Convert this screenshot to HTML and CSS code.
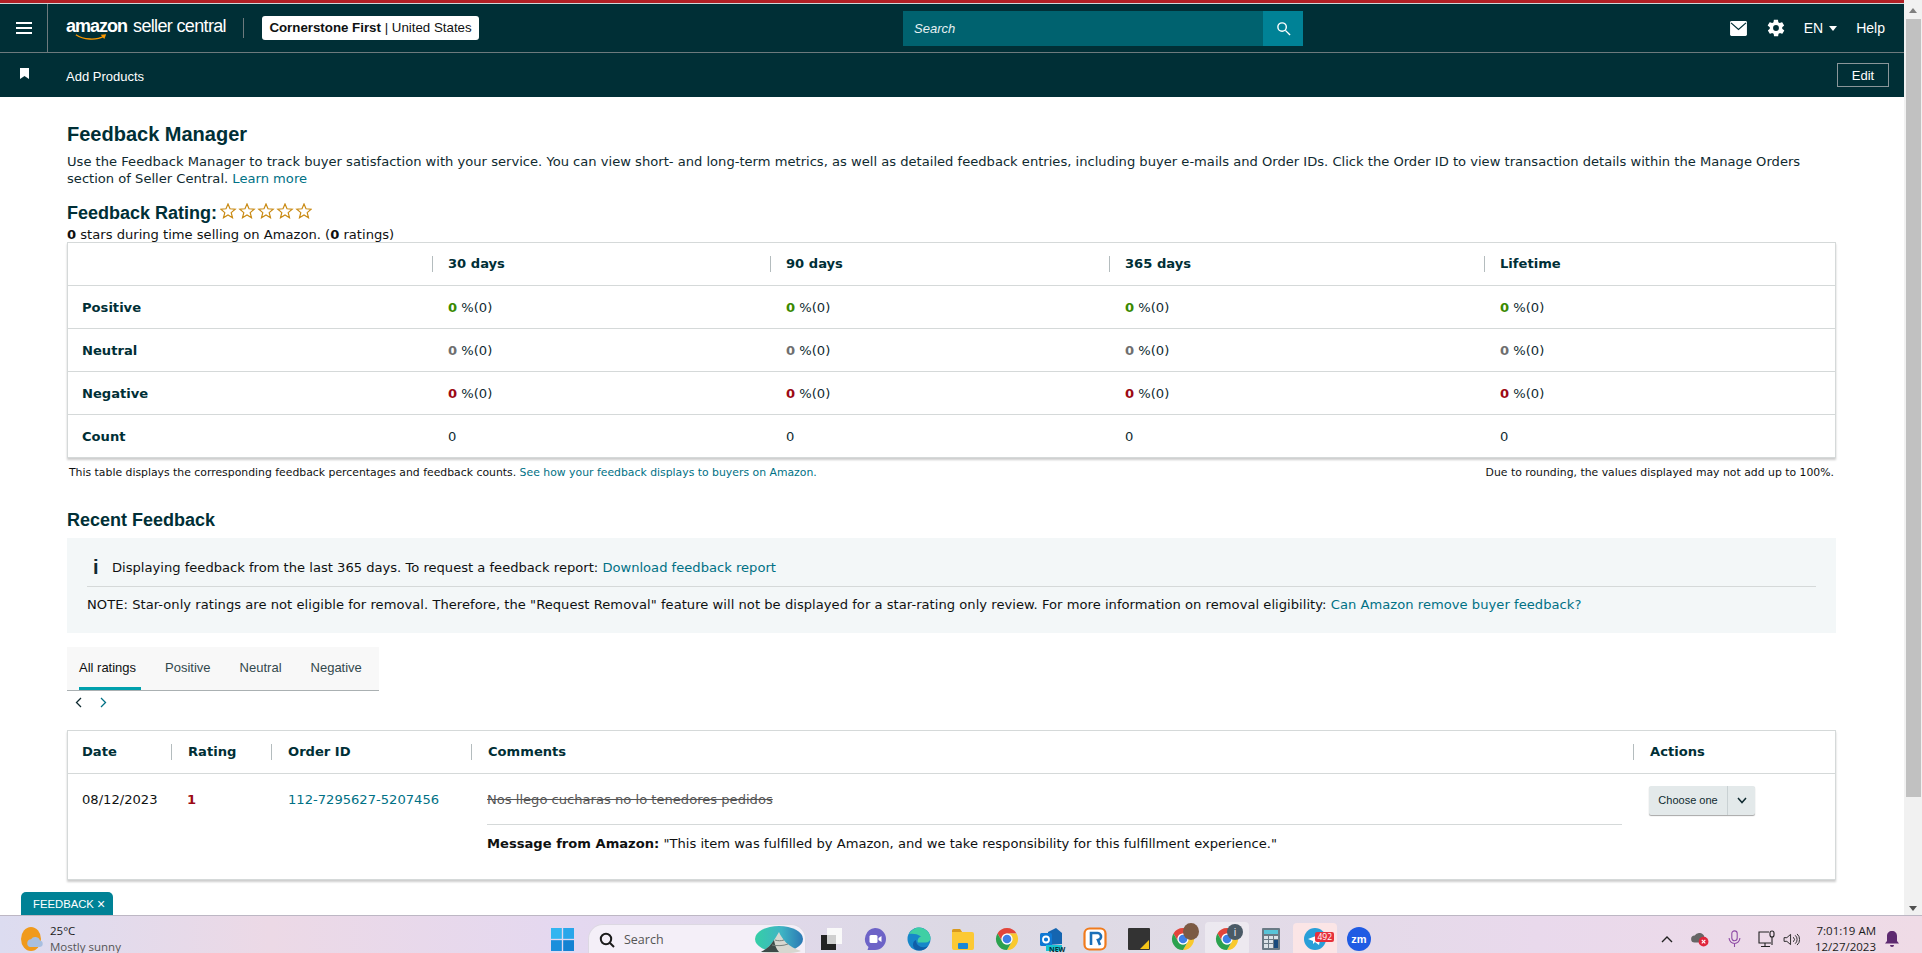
FILE: index.html
```html
<!DOCTYPE html>
<html lang="en">
<head>
    <meta charset="UTF-8">
    <meta name="viewport" content="width=device-width, initial-scale=1.0">
    <title>Feedback Manager</title>
    <link rel="stylesheet" href="styles.css">
</head>
<body>
    <div class="browser">
        <div class="page">
            <header class="topbar">
                <div class="nav-main">
                    <div class="menu-cell">
                        <svg class="icon-menu" viewBox="0 0 16 12"><path d="M0 1h16M0 6h16M0 11h16"/></svg>
                    </div>
                    <div class="logo">
                        <span class="logo-amazon">amazon</span><span class="logo-seller">seller central</span>
                        <svg class="logo-smile" viewBox="0 0 36 9"><path class="smile-line" d="M1 1.500C9 7 23 8 32 3"/><path class="smile-tip" d="M28 1.500l6-.5-2 5z"/></svg>
                    </div>
                    <div class="logo-divider"></div>
                    <div class="tenant"><b>Cornerstone First</b> | United States</div>
                    <div class="search">
                        <div class="search-input">Search</div>
                        <div class="search-btn">
                            <svg viewBox="0 0 16 16"><circle cx="6.500" cy="6.500" r="4.500"/><path d="M10 10l5 5"/></svg>
                        </div>
                    </div>
                    <div class="nav-right">
                        <svg class="icon-mail" viewBox="0 0 18 16"><rect width="18" height="16" rx="1.500" fill="#fff"/><path d="M1 2l8 7 8-7" fill="none" stroke="#002f36" stroke-width="1.300"/></svg>
                        <svg class="icon-gear" viewBox="0 0 24 24"><path d="M19.400 13c.1-.3.1-.7.1-1s0-.7-.1-1l2.100-1.600c.2-.2.2-.4.1-.6l-2-3.500c-.1-.2-.4-.3-.6-.2l-2.500 1c-.5-.4-1.100-.7-1.700-1l-.4-2.600c0-.3-.2-.5-.5-.5h-4c-.3 0-.5.2-.5.500l-.4 2.600c-.6.300-1.200.6-1.700 1l-2.500-1c-.2-.1-.5 0-.6.200l-2 3.500c-.1.200-.1.500.1.600L4.600 11c-.1.300-.1.700-.1 1s0 .7.100 1l-2.100 1.600c-.2.200-.2.400-.1.600l2 3.500c.1.200.4.300.6.200l2.500-1c.5.400 1.100.7 1.700 1l.4 2.600c0 .3.200.5.500.5h4c.3 0 .5-.2.500-.5l.4-2.600c.6-.3 1.200-.6 1.700-1l2.500 1c.2.100.5 0 .6-.2l2-3.500c.1-.2.100-.4-.1-.6zM12 15.500a3.500 3.500 0 1 1 0-7 3.500 3.500 0 0 1 0 7z"/></svg>
                        <span class="lang">EN<i class="caret"></i></span>
                        <span>Help</span>
                    </div>
                </div>
                <div class="nav-sub">
                    <svg class="icon-bookmark" viewBox="0 0 9 11"><path d="M0 0h9v11L4.500 8 0 11z"/></svg>
                    <span class="sub-link">Add Products</span>
                    <button class="edit-btn">Edit</button>
                </div>
            </header>

            <main class="content">
                <h1 class="title">Feedback Manager</h1>
                <p class="intro">Use the Feedback Manager to track buyer satisfaction with your service. You can view short- and long-term metrics, as well as detailed feedback entries, including buyer e-mails and Order IDs. Click the Order ID to view transaction details within the Manage Orders section of Seller Central. <a href="#">Learn more</a></p>

                <div class="rating-head">
                    <h2>Feedback Rating:</h2>
                    <svg class="stars" viewBox="0 0 92 16">
                        <defs><path id="star" d="M8 1l2 4.800 5.200.4-4 3.400 1.300 5.100L8 11.900l-4.500 2.800 1.300-5.100-4-3.400L6 5.800z"/></defs>
                        <use href="#star"/><use href="#star" x="19"/><use href="#star" x="38"/><use href="#star" x="57"/><use href="#star" x="76"/>
                    </svg>
                </div>
                <p class="rating-sub"><b>0</b> stars during time selling on Amazon. (<b>0</b> ratings)</p>

                <div class="card stats">
                    <div class="stats-row head">
                        <div></div>
                        <div class="th">30 days</div>
                        <div class="th">90 days</div>
                        <div class="th">365 days</div>
                        <div class="th">Lifetime</div>
                    </div>
                    <div class="stats-row">
                        <div class="label">Positive</div>
                        <div class="val"><b class="pos">0</b> %(0)</div>
                        <div class="val"><b class="pos">0</b> %(0)</div>
                        <div class="val"><b class="pos">0</b> %(0)</div>
                        <div class="val"><b class="pos">0</b> %(0)</div>
                    </div>
                    <div class="stats-row">
                        <div class="label">Neutral</div>
                        <div class="val"><b class="neu">0</b> %(0)</div>
                        <div class="val"><b class="neu">0</b> %(0)</div>
                        <div class="val"><b class="neu">0</b> %(0)</div>
                        <div class="val"><b class="neu">0</b> %(0)</div>
                    </div>
                    <div class="stats-row">
                        <div class="label">Negative</div>
                        <div class="val"><b class="neg">0</b> %(0)</div>
                        <div class="val"><b class="neg">0</b> %(0)</div>
                        <div class="val"><b class="neg">0</b> %(0)</div>
                        <div class="val"><b class="neg">0</b> %(0)</div>
                    </div>
                    <div class="stats-row">
                        <div class="label">Count</div>
                        <div class="val">0</div>
                        <div class="val">0</div>
                        <div class="val">0</div>
                        <div class="val">0</div>
                    </div>
                </div>
                <div class="stats-note">
                    <span>This table displays the corresponding feedback percentages and feedback counts. <a href="#">See how your feedback displays to buyers on Amazon.</a></span>
                    <span>Due to rounding, the values displayed may not add up to 100%.</span>
                </div>

                <h2 class="section-title">Recent Feedback</h2>
                <div class="notice">
                    <div class="notice-top"><span class="info-i">i</span>Displaying feedback from the last 365 days. To request a feedback report: <a href="#">Download feedback report</a></div>
                    <div class="notice-note">NOTE: Star-only ratings are not eligible for removal. Therefore, the "Request Removal" feature will not be displayed for a star-rating only review. For more information on removal eligibility: <a href="#">Can Amazon remove buyer feedback?</a></div>
                </div>

                <div class="tabs">
                    <span class="tab active">All ratings</span>
                    <span class="tab">Positive</span>
                    <span class="tab">Neutral</span>
                    <span class="tab">Negative</span>
                </div>
                <div class="pager">
                    <svg viewBox="0 0 7 11"><path d="M6 1L1.500 5.500 6 10"/></svg>
                    <svg class="next" viewBox="0 0 7 11"><path d="M1 1l4.500 4.500L1 10"/></svg>
                </div>

                <div class="card recent">
                    <div class="recent-row head">
                        <div class="th first">Date</div>
                        <div class="th">Rating</div>
                        <div class="th">Order ID</div>
                        <div class="th">Comments</div>
                        <div class="th">Actions</div>
                    </div>
                    <div class="recent-row body">
                        <div class="cell-date">08/12/2023</div>
                        <div class="cell-rating"><b class="neg">1</b></div>
                        <div class="cell-order"><a href="#">112-7295627-5207456</a></div>
                        <div class="cell-comment">
                            <div class="struck">Nos llego cucharas no lo tenedores pedidos</div>
                            <div class="amazon-msg"><b>Message from Amazon:</b> "This item was fulfilled by Amazon, and we take responsibility for this fulfillment experience."</div>
                        </div>
                        <div class="cell-action">
                            <div class="choose">
                                <span class="choose-label">Choose one</span>
                                <span class="choose-arrow"><svg viewBox="0 0 10 7"><path d="M1 1l4 4.500L9 1"/></svg></span>
                            </div>
                        </div>
                    </div>
                </div>
            </main>
        </div>
        <div class="scrollbar">
            <i class="arrow up"></i>
            <div class="thumb"></div>
            <i class="arrow down"></i>
        </div>
        <div class="feedback-tab">FEEDBACK <span>×</span></div>
    </div>

    <footer class="taskbar">
        <div class="weather">
            <svg viewBox="0 0 24 28" width="24" height="28"><ellipse cx="10" cy="14" rx="10" ry="12" fill="#f09a1c"/><path d="M9 22a4 4 0 0 1 1-7.800 5 5 0 0 1 9 1.300 3.300 3.300 0 0 1 0 6.500z" fill="#a8bfe0"/></svg>
            <div class="weather-text"><span>25°C</span><span class="weather-sub">Mostly sunny</span></div>
        </div>
        <div class="task-center">
            <svg class="task-win" viewBox="0 0 24 24"><rect width="11.300" height="11.300" fill="#33b5f0"/><rect x="12.700" width="11.300" height="11.300" fill="#2aa6ea"/><rect y="12.700" width="11.300" height="11.300" fill="#1a8fdc"/><rect x="12.700" y="12.700" width="11.300" height="11.300" fill="#1482d2"/></svg>
            <div class="task-search">
                <svg viewBox="0 0 16 16"><circle cx="7" cy="7" r="5.200"/><path d="M11 11l4 4"/></svg>
                <span>Search</span>
                <svg class="search-art" viewBox="0 0 50 29">
                    <defs><linearGradient id="art-sky" x1="0" x2="1" y1="0" y2="0"><stop offset="0" stop-color="#35cfa6"/><stop offset="0.55" stop-color="#3fb4c4"/><stop offset="1" stop-color="#2b78b4"/></linearGradient></defs>
                    <ellipse cx="25" cy="14" rx="24" ry="13" fill="url(#art-sky)"/>
                    <path d="M7 27C16 23 21 14 25 7c3 7 9 15 22 19-7 3-30 3-40 1z" fill="#d7d7d0"/>
                    <path d="M7 27c6-3 10-7 13-12 1 5 2 9 5 12z" fill="#3d4a48"/>
                    <path d="M21 15c3 1 6 1 9 0M18 20c5 1 11 1 16-1" fill="none" stroke="#77807c"/>
                </svg>
            </div>
            <div class="task-icon"><svg viewBox="0 0 24 24"><rect x="8" y="1" width="15" height="16" fill="#f9f9f9"/><rect x="2" y="8" width="15" height="15" fill="#232323"/><rect x="8" y="8" width="9" height="9" fill="#cfcfcf"/></svg></div>
            <div class="task-icon"><svg viewBox="0 0 24 24"><path d="M12 1a11 11 0 0 1 0 22H4.500l1-3A11 11 0 0 1 12 1z" fill="#6d63c7"/><rect x="6.500" y="8" width="8" height="8" rx="1.500" fill="#fff"/><path d="M15.500 11l3-2v6l-3-2z" fill="#fff"/></svg></div>
            <div class="task-icon"><svg viewBox="0 0 24 24"><circle cx="12" cy="12" r="11.500" fill="#1787c9"/><path d="M2 7C5 2 9 .5 12 .5c6 0 11.500 5 11.500 11 0 2-2 4-5 4H11c-1-2 0-5 3-6-4-3-9-3-12-2.500z" fill="#3fcfa4"/><path d="M9 13c0 6 6 9 12 6-2 3-5 4.500-9 4.500-4 0-6-3-6-6 0-2 1-4 3-4.500z" fill="#0f5fa8"/></svg></div>
            <div class="task-icon"><svg viewBox="0 0 24 24"><path d="M1 4a2 2 0 0 1 2-2h6l2 3h10a2 2 0 0 1 2 2v14a2 2 0 0 1-2 2H3a2 2 0 0 1-2-2z" fill="#fcc934"/><path d="M1 4a2 2 0 0 1 2-2h6l2 3H1z" fill="#d99a1e"/><rect x="7" y="16" width="10" height="6" rx="1" fill="#1b87d6"/></svg></div>
            <div class="task-icon"><svg viewBox="0 0 24 24"><use href="#chrome-logo"/></svg></div>
            <div class="task-icon"><svg viewBox="0 0 24 24"><path d="M9 5l8-4 6 5v11l-14 1z" fill="#1565b0"/><rect x="1" y="6" width="12" height="13" rx="1.500" fill="#0f78d4"/><circle cx="7" cy="12.500" r="3" fill="none" stroke="#fff" stroke-width="1.800"/><rect x="7" y="18" width="16" height="6" fill="#17c4d4"/></svg><span class="new-tag">NEW</span></div>
            <div class="task-icon"><svg viewBox="0 0 24 24"><rect x="1.500" y="1.500" width="21" height="21" rx="5" fill="#fff" stroke="#f07b1d" stroke-width="2.200"/><path d="M8 18V6h6a3.500 3.500 0 0 1 1 7l2 5" fill="none" stroke="#1a6fb8" stroke-width="2.600"/></svg></div>
            <div class="task-icon"><svg viewBox="0 0 24 24"><rect x="1" y="1" width="22" height="22" rx="1" fill="#333"/><path d="M13 22l9-9v9z" fill="#f5c518"/></svg></div>
            <div class="task-icon"><svg viewBox="0 0 24 24"><use href="#chrome-logo"/></svg><span class="task-photo"></span></div>
            <div class="task-icon active"><svg viewBox="0 0 24 24"><use href="#chrome-logo"/></svg><span class="task-i">i</span></div>
            <div class="task-icon"><svg viewBox="0 0 24 24"><rect x="3" y="1" width="18" height="22" rx="1" fill="#6a7a85"/><rect x="5" y="3" width="14" height="4" fill="#58c4d8"/><path d="M5 9h4v3H5zM10 9h4v3h-4zM15 9h4v3h-4zM5 13h4v3H5zM10 13h4v3h-4zM5 17h4v4H5zM10 17h4v4h-4z" fill="#dbe3e8"/><rect x="15" y="13" width="4" height="8" fill="#174a7c"/></svg></div>
            <div class="task-icon pinned"><svg viewBox="0 0 24 24"><circle cx="12" cy="12" r="11" fill="#2a9fd8"/><path d="M5 12l13-5-2 11-4-3-2 2v-3z" fill="#fff"/></svg><span class="task-badge">492</span></div>
            <div class="task-icon"><svg viewBox="0 0 24 24"><circle cx="12" cy="12" r="12" fill="#1f5be3"/><text class="zm" x="12" y="16" text-anchor="middle">zm</text></svg></div>
        </div>
        <div class="tray">
            <svg class="tray-chevron" viewBox="0 0 12 7"><path d="M1 6l5-5 5 5"/></svg>
            <svg class="tray-cloud" viewBox="0 0 20 18"><path d="M4 13a4 4 0 0 1 0-8 6 6 0 0 1 11 2 3 3 0 0 1 0 6z" fill="#666"/><circle cx="14" cy="12" r="5.500" fill="#e0263c"/><path d="M12 10l4 4m0-4l-4 4" stroke="#fff" stroke-width="1.300"/></svg>
            <svg class="tray-mic" viewBox="0 0 14 20"><rect x="4" y="1" width="6" height="11" rx="3"/><path d="M1 9a6 6 0 0 0 12 0M7 15v4"/></svg>
            <svg class="tray-net" viewBox="0 0 18 18"><path d="M11 2H1v11h12M7 13v3M3 16.500h9"/><rect x="12" y="1" width="4" height="6" rx="2"/><path d="M14 7v8"/></svg>
            <svg class="tray-sound" viewBox="0 0 18 14"><path d="M1 5v4h3l4 3.500v-11L4 5zM11 4.500a3.500 3.500 0 0 1 0 5M13 2.500a6 6 0 0 1 0 9M15 1a8 8 0 0 1 0 12"/></svg>
            <div class="clock"><span>7:01:19 AM</span><span>12/27/2023</span></div>
            <svg class="tray-bell" viewBox="0 0 14 16"><path d="M7 0c3 0 5 2 5 5v5l2 2.500H0L2 10V5c0-3 2-5 5-5z"/><path d="M5 14h4a2 2 0 0 1-4 0z"/></svg>
        </div>
    </footer>

    <svg class="defs" width="0" height="0">
        <defs>
            <g id="chrome-logo">
                <path d="M2.470 6.500A11 11 0 0 1 21.530 6.500H12A5.500 5.500 0 0 0 7.240 14.750z" fill="#e2453a"/>
                <path d="M21.530 6.500A11 11 0 0 1 12 23l4.760-8.250A5.500 5.500 0 0 0 12 6.500z" fill="#f9c92e"/>
                <path d="M12 23A11 11 0 0 1 2.470 6.500l4.770 8.250a5.500 5.500 0 0 0 9.520 0z" fill="#2ca24f"/>
                <circle cx="12" cy="12" r="5.500" fill="#fff"/>
                <circle cx="12" cy="12" r="4.300" fill="#3f7fe6"/>
            </g>
        </defs>
    </svg>
</body>
</html>
```

FILE: styles.css
```css
* {
    margin: 0;
    padding: 0;
    box-sizing: border-box;
}

html, body {
    height: 100%;
    overflow: hidden;
}

body {
    display: flex;
    flex-direction: column;
    font-family: "DejaVu Sans", Verdana, sans-serif;
    font-size: 13.1px;
    color: #0f1111;
    background: #fff;
}

a {
    color: #007185;
    text-decoration: none;
}

.browser {
    flex: 1;
    display: flex;
    position: relative;
    min-height: 0;
}

.page {
    flex: 1;
    min-width: 0;
    overflow: hidden;
}

/* top nav */
.topbar {
    background: #002f36;
    border-top: 3px solid #b12025;
    color: #fff;
    font-family: "Liberation Sans", Arial, sans-serif;
}

.nav-main {
    height: 50px;
    border-top: 1px solid #cfd8da;
    border-bottom: 1px solid #6d7a7d;
    display: flex;
    align-items: center;
}

.menu-cell {
    width: 48px;
    height: 100%;
    border-right: 1px solid #6d7a7d;
    display: flex;
    align-items: center;
    justify-content: center;
}

.icon-menu {
    width: 16px;
    height: 12px;
    stroke: #fff;
    stroke-width: 2;
}

.logo {
    position: relative;
    margin-left: 18px;
    width: 160px;
    height: 34px;
    font-size: 18px;
    line-height: 31px;
    white-space: nowrap;
}

.logo-amazon {
    font-weight: 700;
    letter-spacing: -1px;
}

.logo-seller {
    margin-left: 6px;
    font-weight: 400;
    letter-spacing: -0.65px;
}

.logo-smile {
    position: absolute;
    left: 9px;
    top: 22px;
    width: 33px;
    height: 9px;
}

.smile-line {
    fill: none;
    stroke: #f90;
    stroke-width: 1.500;
}

.smile-tip {
    fill: #f90;
}

.logo-divider {
    width: 1px;
    height: 20px;
    background: #6d7a7d;
    margin-left: 17px;
}

.tenant {
    margin-left: 18px;
    width: 217px;
    height: 24px;
    background: #fff;
    border-radius: 3px;
    color: #0f1111;
    font-size: 13.3px;
    line-height: 24px;
    text-align: center;
    white-space: nowrap;
}

.search {
    margin-left: 424px;
    width: 400px;
    height: 35px;
    display: flex;
}

.search-input {
    flex: 1;
    background: #00626f;
    color: #e6f0f2;
    font-style: italic;
    font-size: 13px;
    line-height: 35px;
    padding-left: 11px;
}

.search-btn {
    width: 40px;
    background: #008296;
    display: flex;
    align-items: center;
    justify-content: center;
}

.search-btn svg {
    width: 15px;
    height: 15px;
    fill: none;
    stroke: #fff;
    stroke-width: 1.500;
}

.nav-right {
    margin-left: auto;
    margin-right: 19px;
    display: flex;
    align-items: center;
    font-size: 14px;
}

.icon-mail {
    width: 17px;
    height: 15px;
}

.icon-gear {
    width: 20px;
    height: 20px;
    fill: #fff;
    margin-left: 19px;
}

.lang {
    margin-left: 18px;
    margin-right: 19px;
    display: flex;
    align-items: center;
}

.caret {
    margin-left: 6px;
    border: 4px solid transparent;
    border-top: 5px solid #fff;
    border-bottom: 0;
}

.nav-sub {
    height: 44px;
    display: flex;
    align-items: center;
    font-size: 13px;
}

.icon-bookmark {
    width: 9px;
    height: 11px;
    fill: #fff;
    margin-left: 20px;
    margin-top: -3px;
}

.sub-link {
    margin-left: 37px;
    margin-top: 2px;
}

.edit-btn {
    margin-left: auto;
    margin-right: 15px;
    width: 52px;
    height: 24px;
    background: transparent;
    border: 1px solid #8a9699;
    color: #fff;
    font-family: inherit;
    font-size: 13px;
}

/* main content */
.content {
    padding: 24px 0 0 67px;
    width: 1836px;
}

.title {
    font-family: "Liberation Sans", Arial, sans-serif;
    font-size: 20px;
    line-height: 26px;
    color: #002f36;
}

.intro {
    margin-top: 6px;
    line-height: 17px;
    color: #0f2a30;
    padding-right: 30px;
}

.rating-head {
    margin-top: 16px;
    display: flex;
    align-items: center;
    height: 20px;
}

.rating-head h2 {
    font-family: "Liberation Sans", Arial, sans-serif;
    font-size: 18px;
    color: #002f36;
}

.stars {
    width: 92px;
    height: 16px;
    margin-left: 3px;
    margin-top: -4px;
    fill: none;
    stroke: #c98a13;
    stroke-width: 1.200;
}

.rating-sub {
    line-height: 15px;
    margin-top: 4px;
}

.card {
    background: #fff;
    border: 1px solid #d5d9d9;
    box-shadow: 0 2px 2px rgba(0, 0, 0, 0.2);
}

.stats {
    height: 216px;
}

.stats-row {
    display: grid;
    grid-template-columns: 364px 338px 339px 375px 1fr;
    height: 43px;
    align-items: center;
    border-bottom: 1px solid #d5d9d9;
}

.stats-row:last-child {
    border-bottom: 0;
}

.th {
    font-weight: 700;
    color: #002f36;
    height: 16px;
    line-height: 16px;
    padding-left: 15px;
    border-left: 1px solid #b4bcbe;
}

.label {
    padding-left: 14px;
    font-weight: 700;
    color: #002f36;
}

.val {
    padding-left: 16px;
    color: #0f2a30;
}

.pos { color: #3a8a00; }
.neu { color: #6f6f6f; }
.neg { color: #9c0a14; }

.stats-note {
    display: flex;
    justify-content: space-between;
    padding: 8px 2px 0;
    font-size: 10.85px;
    line-height: 14px;
}

.section-title {
    margin-top: 30px;
    font-family: "Liberation Sans", Arial, sans-serif;
    font-size: 18px;
    line-height: 20px;
    color: #002f36;
}

.notice {
    margin-top: 8px;
    height: 95px;
    background: #f3f7f8;
    padding: 19px 20px 0;
}

.notice-top {
    padding: 0 0 7px 4px;
    border-bottom: 1px solid #d5d9d9;
    line-height: 22px;
}

.info-i {
    display: inline-block;
    width: 21px;
    font-family: "Liberation Sans", Arial, sans-serif;
    font-size: 20px;
    font-weight: 700;
    vertical-align: top;
    line-height: 20px;
    color: #0f2a30;
    padding-left: 2px;
}

.notice-note {
    margin-top: 9px;
    line-height: 17px;
    letter-spacing: 0.03px;
}

.tabs {
    margin-top: 14px;
    width: 312px;
    height: 44px;
    background: #f8f8f8;
    border-bottom: 1px solid #aab0b2;
    display: flex;
    font-family: "Liberation Sans", Arial, sans-serif;
    font-size: 13px;
}

.tab {
    margin-left: 29px;
    line-height: 42px;
    height: 43px;
    color: #33484d;
    white-space: nowrap;
}

.tab:first-child {
    margin-left: 12px;
}

.tab.active {
    padding-right: 5px;
    margin-right: -5px;
    color: #0f1111;
    border-bottom: 3px solid #00a0ad;
}

.pager {
    height: 23px;
    display: flex;
    align-items: center;
    padding-left: 8px;
    gap: 18px;
}

.pager svg {
    width: 7px;
    height: 11px;
    fill: none;
    stroke: #0f2a30;
    stroke-width: 1.300;
}

.pager .next {
    stroke: #007185;
}

.recent {
    margin-top: 16px;
    height: 150px;
}

.recent-row {
    display: grid;
    grid-template-columns: 103px 100px 200px 1162px 1fr;
    align-items: center;
}

.recent-row.head {
    height: 43px;
    border-bottom: 1px solid #d5d9d9;
}

.recent-row .th {
    padding-left: 16px;
}

.recent-row.body {
    align-items: start;
    padding-top: 17px;
    line-height: 17px;
}

.recent-row.head .first {
    padding-left: 14px;
    border-left: 0;
}

.cell-date {
    padding-left: 14px;
    white-space: nowrap;
}

.cell-rating {
    padding-left: 16px;
}

.cell-order {
    padding-left: 17px;
}

.cell-comment {
    padding-left: 16px;
    padding-right: 11px;
}

.struck {
    text-decoration: line-through;
    color: #555;
    padding-bottom: 16px;
    border-bottom: 1px solid #d5d9d9;
}

.amazon-msg {
    margin-top: 10px;
}

.cell-action {
    padding-left: 16px;
    margin-top: -5px;
}

.choose {
    width: 106px;
    height: 29px;
    display: flex;
    background: #e3e9ea;
    border-radius: 2px;
    box-shadow: 0 1px 1px rgba(0, 0, 0, 0.35);
    font-family: "Liberation Sans", Arial, sans-serif;
}

.choose-label {
    width: 78px;
    font-size: 11px;
    line-height: 29px;
    text-align: center;
    color: #0f2a30;
}

.choose-arrow {
    flex: 1;
    border-left: 1px solid #c9d1d3;
    display: flex;
    align-items: center;
    justify-content: center;
}

.choose-arrow svg {
    width: 10px;
    height: 7px;
    fill: none;
    stroke: #0f2a30;
    stroke-width: 1.500;
}

/* scrollbar */
.scrollbar {
    width: 18px;
    background: #f1f1f1;
    display: flex;
    flex-direction: column;
    align-items: center;
}

.thumb {
    width: 15px;
    height: 778px;
    margin-top: 3px;
    background: #c1c1c1;
}

.arrow {
    display: block;
    border: 4px solid transparent;
}

.arrow.up {
    margin-top: 8px;
    border-top: 0;
    border-bottom: 5px solid #7f7f7f;
    margin-bottom: 3px;
}

.arrow.down {
    margin-top: auto;
    margin-bottom: 4px;
    border-bottom: 0;
    border-top: 5px solid #505050;
}

.feedback-tab {
    position: absolute;
    left: 21px;
    bottom: 0;
    width: 92px;
    height: 23px;
    background: #008296;
    border-radius: 5px 5px 0 0;
    color: #fff;
    font-family: "Liberation Sans", Arial, sans-serif;
    font-size: 11.3px;
    line-height: 24px;
    padding-left: 12px;
    white-space: nowrap;
}

.feedback-tab span {
    font-size: 14px;
    vertical-align: -1px;
}

/* windows taskbar */
.taskbar {
    height: 38px;
    flex: none;
    display: flex;
    align-items: center;
    position: relative;
    padding-top: 9px;
    background: linear-gradient(90deg, #dcdcf0 0%, #ecd9e6 14%, #e4d8f0 30%, #dcd9e4 50%, #e0dbe6 62%, #e9d9ec 80%, #efdbe6 100%);
    border-top: 1px solid #bdb7c4;
    font-family: "Open Sans", "Noto Sans", sans-serif;
    color: #1b1b1b;
}

.weather {
    margin-left: 21px;
    display: flex;
    align-items: center;
    gap: 5px;
}

.weather-text {
    display: flex;
    flex-direction: column;
    font-size: 11.5px;
    line-height: 16px;
}

.weather-sub {
    color: #555;
}

.task-center {
    position: absolute;
    left: 551px;
    top: 0;
    padding-top: 9px;
    height: 100%;
    display: flex;
    align-items: center;
}

.task-win {
    width: 23px;
    height: 23px;
}

.task-search {
    margin-left: 14px;
    margin-right: 3px;
    width: 218px;
    height: 30px;
    border-radius: 15px 15px 0 0;
    background: #f4eff8;
    border: 1px solid #dcd8e2;
    border-bottom: 0;
    display: flex;
    align-items: center;
    padding-left: 10px;
    font-size: 12.5px;
    color: #555;
}

.task-search svg {
    width: 16px;
    height: 16px;
    fill: none;
    stroke: #1b1b1b;
    stroke-width: 2;
    margin-right: 9px;
}

.task-search .search-art {
    width: 50px;
    height: 29px;
    stroke: none;
    stroke-width: 1;
    margin-left: auto;
    margin-right: 1px;
}

.task-icon {
    position: relative;
    width: 44px;
    height: 33px;
    display: flex;
    align-items: center;
    justify-content: center;
}

.task-icon svg {
    width: 24px;
    height: 24px;
}

.task-icon.active {
    background: rgba(255, 255, 255, 0.4);
    border-radius: 4px;
    margin-top: -1px;
}

.task-icon.pinned {
    background: #fbe5e6;
    border-radius: 4px;
}

.task-photo {
    position: absolute;
    right: 6px;
    top: 0;
    width: 16px;
    height: 17px;
    border-radius: 50%;
    background: #7b5a44;
}

.task-i {
    position: absolute;
    right: 6px;
    top: 2px;
    width: 16px;
    height: 16px;
    border-radius: 50%;
    background: #4a5a66;
    color: #fff;
    font-size: 10px;
    line-height: 16px;
    text-align: center;
}

.task-badge {
    position: absolute;
    right: 3px;
    top: 9px;
    background: #e6313c;
    color: #fff;
    font-size: 8.5px;
    line-height: 10px;
    padding: 0 2px;
    border-radius: 2px;
}

.new-tag {
    position: absolute;
    left: 20px;
    bottom: 3px;
    font-size: 7px;
    line-height: 7px;
    font-weight: 700;
    color: #08313a;
}

.zm {
    fill: #fff;
    font-family: "Liberation Sans", Arial, sans-serif;
    font-size: 11px;
    font-weight: 700;
}

.tray {
    margin-left: auto;
    display: flex;
    align-items: center;
    height: 100%;
}

.tray-chevron {
    width: 12px;
    height: 7px;
    fill: none;
    stroke: #222;
    stroke-width: 1.400;
}

.tray-cloud {
    width: 18px;
    height: 16px;
    margin-left: 18px;
}

.tray-mic {
    width: 13px;
    height: 18px;
    margin-left: 19px;
    fill: none;
    stroke: #8e4aa5;
    stroke-width: 1.200;
}

.tray-net {
    width: 18px;
    height: 18px;
    margin-left: 17px;
    fill: none;
    stroke: #222;
    stroke-width: 1.100;
}

.tray-sound {
    width: 17px;
    height: 13px;
    margin-left: 7px;
    fill: none;
    stroke: #222;
    stroke-width: 1;
}

.clock {
    margin-left: 15px;
    display: flex;
    flex-direction: column;
    align-items: flex-end;
    font-size: 11.5px;
    line-height: 16px;
}

.tray-bell {
    width: 14px;
    height: 16px;
    margin-left: 9px;
    margin-right: 23px;
    fill: #5e2a70;
}

.defs {
    position: absolute;
}
```
